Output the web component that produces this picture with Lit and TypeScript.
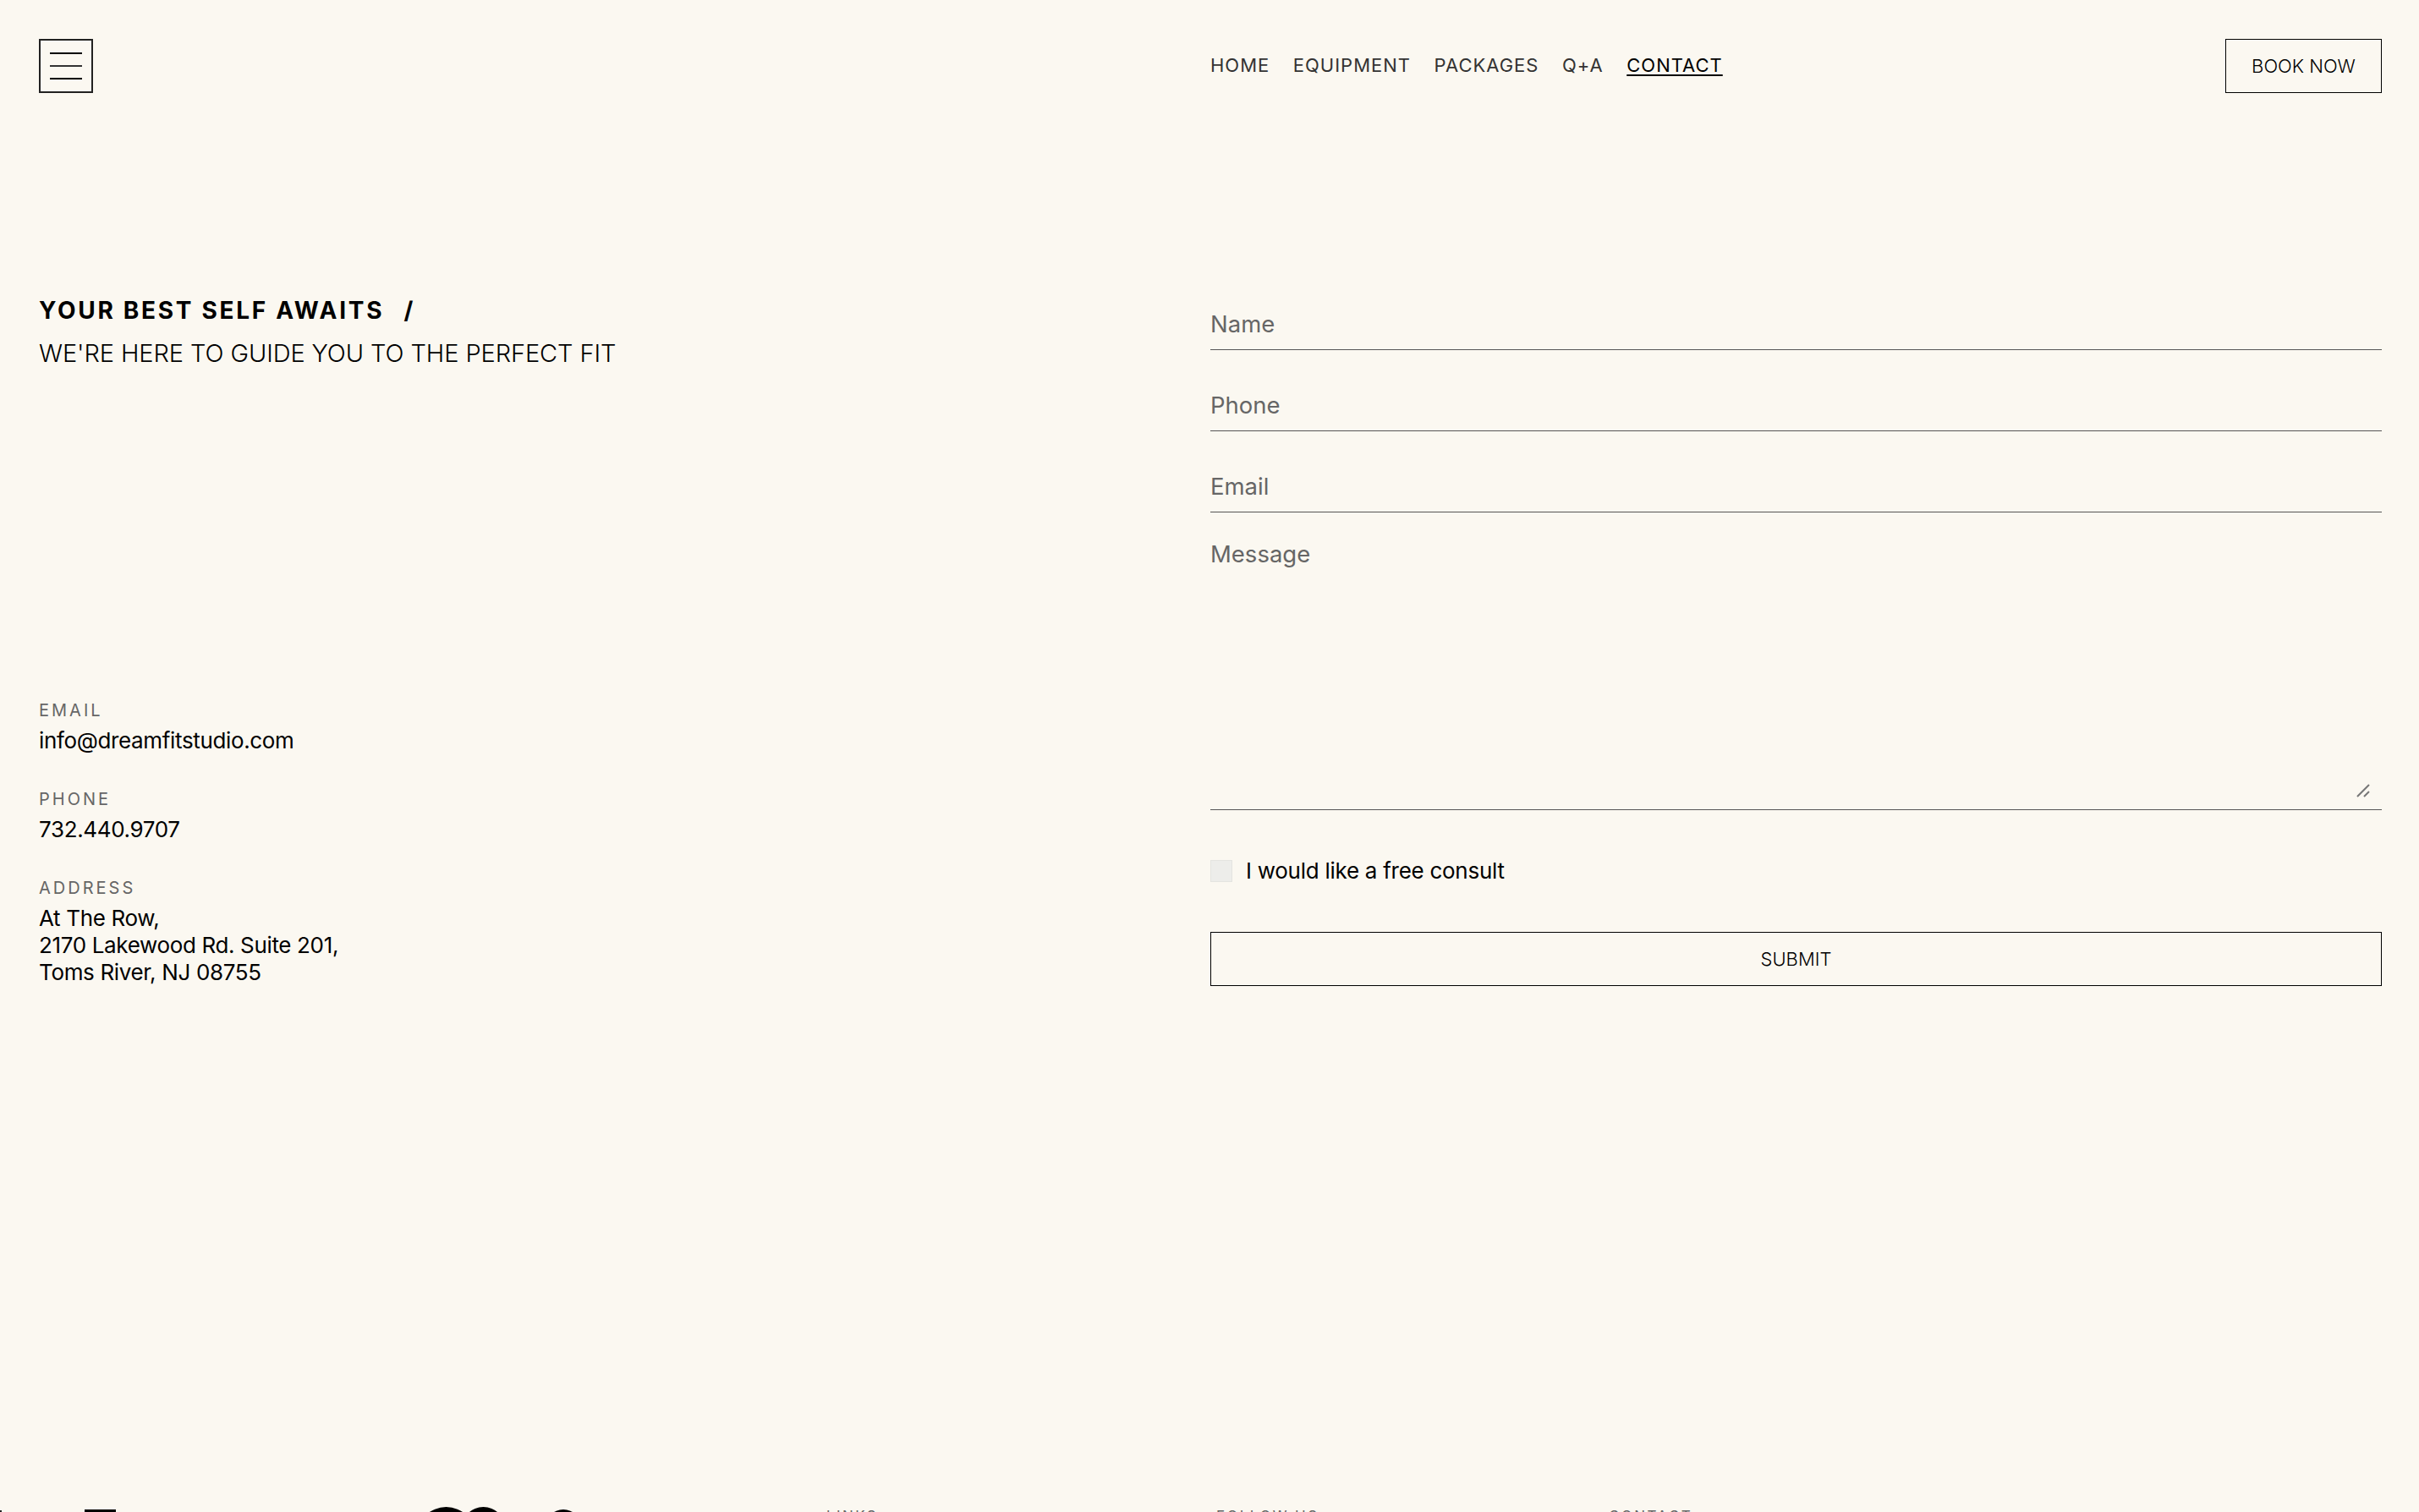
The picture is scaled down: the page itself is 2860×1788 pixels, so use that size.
import { LitElement, html, css } from 'lit';
import { customElement } from 'lit/decorators.js';

@customElement('app-root')
export class AppRoot extends LitElement {
  static styles = css`
    :host {
      display: block;
      height: 1788px;
      overflow: hidden;
      background: #fbf8f1;
      color: #000;
      font-family: Inter, "Liberation Sans", sans-serif;
    }
    .header {
      display: grid;
      grid-template-columns: 1fr 1385px;
      padding: 46px 44px 0 46px;
      height: 110px;
      box-sizing: border-box;
    }
    .burger {
      width: 64px;
      height: 64px;
      box-sizing: border-box;
      border: 2px solid #222;
      background: none;
      padding: 0;
      display: flex;
      flex-direction: column;
      align-items: center;
      justify-content: center;
      gap: 13px;
    }
    .burger span {
      display: block;
      width: 38px;
      height: 2px;
      background: #000;
    }
    .burger span:nth-child(2) {
      background: #333;
    }
    .bar {
      display: flex;
      align-items: center;
      justify-content: space-between;
    }
    .nav {
      display: flex;
      gap: 27.5px;
      padding-bottom: 2px;
      font-size: 22px;
      letter-spacing: 1px;
      color: #333;
    }
    .nav a.active {
      color: #000;
      text-decoration: underline;
      text-decoration-thickness: 2px;
      text-underline-offset: 3px;
    }
    .book {
      width: 185px;
      height: 64px;
      box-sizing: border-box;
      border: 1px solid #000;
      display: flex;
      align-items: center;
      justify-content: center;
      font-size: 22px;
      font-weight: 300;
    }
    .main {
      display: grid;
      grid-template-columns: 1fr 1385px;
      padding: 238px 44px 0 46px;
    }
    .left {
      display: flex;
      flex-direction: column;
      height: 820px;
    }
    h1 {
      margin: 1px 0 0;
      font-size: 28px;
      line-height: 36px;
      font-weight: 700;
      letter-spacing: 2.7px;
    }
    h1 i {
      font-style: normal;
      margin-left: 14px;
    }
    .sub {
      margin-top: 15px;
      font-size: 29px;
      line-height: 36px;
      font-weight: 300;
      letter-spacing: -0.1px;
    }
    .contact {
      margin-top: 394px;
      display: flex;
      flex-direction: column;
      gap: 43px;
    }
    .label {
      font-size: 20px;
      line-height: 20px;
      letter-spacing: 3px;
      color: #666;
    }
    .val {
      margin-top: 10px;
      font-size: 26px;
      line-height: 32px;
      letter-spacing: -0.35px;
    }
    .form {
      display: flex;
      flex-direction: column;
    }
    .field {
      height: 66px;
      margin-bottom: 30px;
      border-bottom: 1px solid #555;
      font-size: 27.5px;
      color: #666;
      display: flex;
      align-items: flex-end;
      padding-bottom: 13px;
      box-sizing: border-box;
    }
    .message {
      position: relative;
      height: 322px;
      padding-top: 2px;
      border-bottom: 1px solid #555;
      font-size: 27.5px;
      color: #666;
      box-sizing: border-box;
    }
    .grip {
      position: absolute;
      right: 14px;
      bottom: 14px;
    }
    .check {
      display: flex;
      align-items: center;
      gap: 16px;
      margin-top: 55px;
      font-size: 26px;
      line-height: 34px;
      letter-spacing: -0.27px;
    }
    .box {
      width: 26px;
      height: 26px;
      background: #ededea;
      border: 1px solid #e4e4e0;
      box-sizing: border-box;
    }
    .submit {
      margin-top: 55px;
      height: 64px;
      box-sizing: border-box;
      border: 1px solid #000;
      display: flex;
      align-items: center;
      justify-content: center;
      font-size: 22px;
      font-weight: 300;
    }
    .footer {
      margin-top: 614px;
      height: 6px;
      overflow: hidden;
      display: grid;
      grid-template-columns: 977px 461px 464px 1fr;
    }
    .footer .label {
      padding-top: 1px;
      font-size: 17px;
      letter-spacing: 2.4px;
    }
    .logo {
      display: block;
    }
  `;

  render() {
    return html`
      <header class="header">
        <button class="burger"><span></span><span></span><span></span></button>
        <div class="bar">
          <nav class="nav">
            <a>HOME</a><a>EQUIPMENT</a><a>PACKAGES</a><a>Q+A</a><a class="active">CONTACT</a>
          </nav>
          <div class="book">BOOK NOW</div>
        </div>
      </header>
      <main class="main">
        <section class="left">
          <h1>YOUR BEST SELF AWAITS <i>/</i></h1>
          <div class="sub">WE'RE HERE TO GUIDE YOU TO THE PERFECT FIT</div>
          <div class="contact">
            <div><div class="label">EMAIL</div><div class="val">info@dreamfitstudio.com</div></div>
            <div><div class="label">PHONE</div><div class="val">732.440.9707</div></div>
            <div>
              <div class="label">ADDRESS</div>
              <div class="val">At The Row,<br />2170 Lakewood Rd. Suite 201,<br />Toms River, NJ 08755</div>
            </div>
          </div>
        </section>
        <section class="form">
          <div class="field">Name</div>
          <div class="field">Phone</div>
          <div class="field">Email</div>
          <div class="message">
            Message
            <svg class="grip" width="16" height="16" viewBox="0 0 16 16">
              <path d="M1 15 L15 1 M9 15 L15 9" stroke="#777" stroke-width="2" />
            </svg>
          </div>
          <label class="check"><span class="box"></span>I would like a free consult</label>
          <div class="submit">SUBMIT</div>
        </section>
      </main>
      <footer class="footer">
        <svg class="logo" width="700" height="6" viewBox="0 0 700 6">
          <rect x="0" y="4" width="2" height="2" fill="#222" />
          <rect x="100" y="3" width="37" height="3" fill="#000" />
          <circle cx="527.5" cy="34.7" r="34.7" fill="#000" />
          <circle cx="571.5" cy="25.7" r="25.7" fill="#000" />
          <circle cx="666" cy="24.7" r="21.7" fill="#000" />
        </svg>
        <div class="label">LINKS</div>
        <div class="label">FOLLOW US</div>
        <div class="label">CONTACT</div>
      </footer>
    `;
  }
}
